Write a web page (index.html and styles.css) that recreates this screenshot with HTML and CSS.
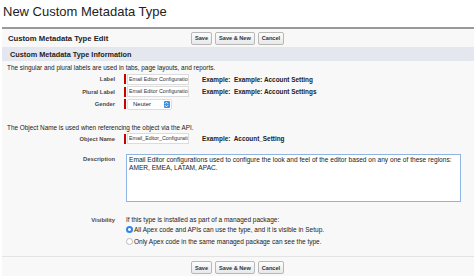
FILE: index.html
```html
<!DOCTYPE html>
<html lang="en">
<head>
    <meta charset="UTF-8">
    <title>New Custom Metadata Type</title>
    <link rel="stylesheet" href="styles.css">
</head>
<body>
    <h1 class="page-title">New Custom Metadata Type</h1>

    <div class="panel">
        <!-- header with buttons -->
        <div class="panel-header">
            <h2>Custom Metadata Type Edit</h2>
            <div class="buttons">
                <button>Save</button>
                <button>Save &amp; New</button>
                <button>Cancel</button>
            </div>
        </div>

        <h3 class="section-title">Custom Metadata Type Information</h3>

        <p class="info">The singular and plural labels are used in tabs, page layouts, and reports.</p>

        <div class="row">
            <label>Label</label>
            <div class="field"><span class="req"></span><span class="input">Email Editor Configuratio</span></div>
            <div class="example">Example:&nbsp; Example: Account Setting</div>
        </div>
        <div class="row">
            <label>Plural Label</label>
            <div class="field"><span class="req"></span><span class="input">Email Editor Configuratio</span></div>
            <div class="example">Example:&nbsp; Example: Account Settings</div>
        </div>
        <div class="row">
            <label>Gender</label>
            <div class="field"><span class="req"></span><span class="select">Neuter<span class="arrow"><svg width="5" height="7" viewBox="0 0 5 7"><path d="M1 2.8 2.5 1.2 4 2.8M1 4.2 2.5 5.8 4 4.2" fill="none" stroke="#fff" stroke-width="0.9"/></svg></span></span></div>
        </div>

        <p class="info info-api">The Object Name is used when referencing the object via the API.</p>

        <div class="row">
            <label>Object Name</label>
            <div class="field"><span class="req"></span><span class="input">Email_Editor_Configurati</span></div>
            <div class="example">Example:&nbsp; Account_Setting</div>
        </div>

        <div class="row row-desc">
            <label>Description</label>
            <div class="textarea">Email Editor configurations used to configure the look and feel of the editor based on any one of these regions:<br>AMER, EMEA, LATAM, APAC.</div>
        </div>

        <div class="row row-vis">
            <label>Visibility</label>
            <div class="vis">
                <div class="vis-note">If this type is installed as part of a managed package:</div>
                <div class="radio-line"><span class="radio checked"></span>All Apex code and APIs can use the type, and it is visible in Setup.</div>
                <div class="radio-line"><span class="radio"></span>Only Apex code in the same managed package can see the type.</div>
            </div>
        </div>

        <div class="panel-footer">
            <div class="buttons">
                <button>Save</button>
                <button>Save &amp; New</button>
                <button>Cancel</button>
            </div>
        </div>
    </div>
</body>
</html>
```

FILE: styles.css
```css
body {
    margin: 0;
    font-family: "Liberation Sans", Arial, sans-serif;
    background: #fff;
    color: #222;
}
.page-title {
    font-size: 13px;
    font-weight: normal;
    color: #222;
    margin: 0;
    padding: 4px 0 0 3px;
    height: 27px;
    line-height: 15px;
    box-sizing: border-box;
}
.panel {
    margin-left: 2px;
    border-top: 2px solid #9a9a9a;
    background: #f8f8f8;
    height: 247px;
}
.panel-header {
    display: flex;
    align-items: center;
    height: 18px;
    border-bottom: 1px solid #e6e6e6;
}
.panel-header h2 {
    font-size: 7.7px;
    margin: 0 0 0 6px;
    width: 183px;
}
.buttons {
    display: flex;
    gap: 3px;
}
.buttons button {
    font-family: "Liberation Sans", Arial, sans-serif;
    font-size: 5.6px;
    font-weight: bold;
    color: #333;
    height: 13px;
    padding: 0 3px;
    border: 1px solid #b8b8b8;
    border-radius: 2px;
    background: linear-gradient(#fdfdfd, #e8e8e8);
}
.section-title {
    font-size: 7.3px;
    margin: 0;
    padding: 0 8px;
    height: 13px;
    line-height: 13px;
    background: #e5e7ee;
}
.info {
    font-size: 6.4px;
    margin: 0 0 2px 0;
    padding: 3px 0 0 5px;
    height: 7px;
    line-height: 7px;
}
.info-api {
    padding-top: 13px;
}
.row {
    display: flex;
    align-items: center;
    height: 12.5px;
    font-size: 6px;
}
.row label {
    width: 113px;
    text-align: right;
    padding-right: 9px;
    color: #4a4a4a;
    font-size: 5.8px;
    font-weight: bold;
}
.field {
    display: flex;
    align-items: center;
    width: 78px;
}
.req {
    width: 2px;
    height: 10px;
    background: #c00;
    margin-right: 1px;
}
.input {
    width: 59px;
    height: 9px;
    line-height: 9px;
    border: 1px solid #dcdcdc;
    background: #fff;
    padding-left: 1px;
    white-space: nowrap;
    font-size: 5.3px;
    color: #333;
}
.select {
    display: flex;
    align-items: center;
    justify-content: space-between;
    width: 38px;
    height: 9px;
    padding-left: 5px;
    border: 1px solid #ddd;
    border-radius: 2px;
    background: #fff;
    font-size: 6px;
}
.arrow {
    width: 6px;
    height: 7px;
    background: #3c8ee6;
    border-radius: 1px;
    display: flex;
    margin-right: 1px;
}
.example {
    font-weight: bold;
    font-size: 6.4px;
    color: #222;
}
.row-desc {
    align-items: flex-start;
    height: auto;
    margin-top: 9px;
}
.row-desc label {
    padding-top: 2px;
}
.textarea {
    margin-left: 2px;
    width: 335px;
    height: 48px;
    box-sizing: border-box;
    border: 1.5px solid #8db4e2;
    background: #fff;
    padding: 1px 2px;
    font-size: 6.6px;
    line-height: 7.5px;
    color: #222;
}
.row-vis {
    align-items: flex-start;
    height: auto;
    margin-top: 14px;
}
.row-vis label {
    margin-top: 1px;
}
.vis {
    margin-left: 2px;
    font-size: 6.5px;
    line-height: 7px;
}
.radio-line {
    display: flex;
    align-items: center;
    height: 12px;
}
.radio {
    width: 7px;
    height: 7px;
    border-radius: 50%;
    border: 1px solid #bbb;
    background: #fff;
    box-sizing: border-box;
    margin-right: 1px;
}
.radio.checked {
    border: none;
    background: radial-gradient(circle, #fff 0 1.2px, #2f86ea 1.6px);
}
.panel-footer {
    margin-top: 9px;
    border-top: 1px solid #e3e3e3;
    padding: 4px 0 0 189px;
}
```
